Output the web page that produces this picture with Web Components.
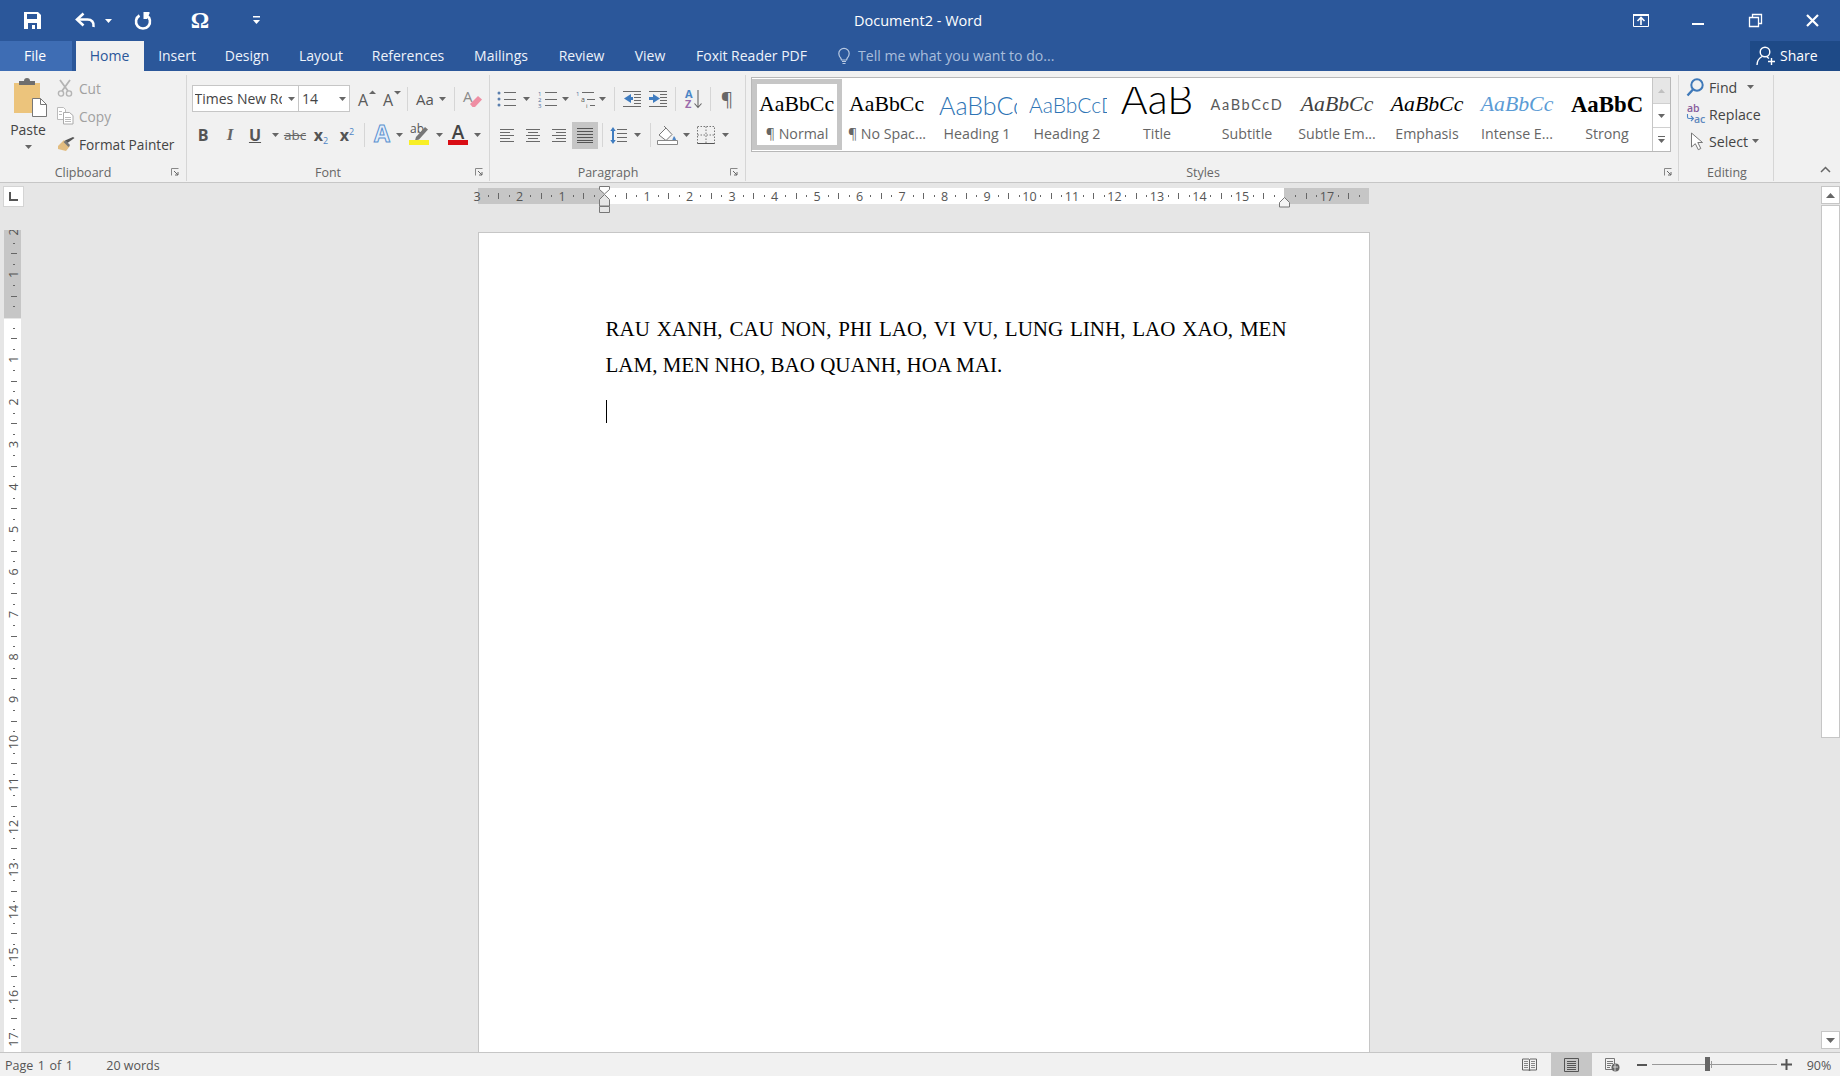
<!DOCTYPE html>
<html><head><meta charset="utf-8"><title>Document2 - Word</title>
<style>html,body{margin:0;height:100%;overflow:hidden;background:#e6e6e6}</style></head>
<body><word-app></word-app>
<script>
const SANS='"Open Sans","Noto Sans",sans-serif';
const s=(w,h,b,extra='')=>`<svg width="${w}" height="${h}" viewBox="0 0 ${w} ${h}" style="display:block;overflow:visible;${extra}">${b}</svg>`;
const row=(start,items,cs='')=>{let x=start,o='';for(const [c,w,html,st] of items){const l=c-w/2;o+=`<word-cell style="width:${w}px;margin-left:${(l-x).toFixed(2)}px;${cs}${st||''}">${html||''}</word-cell>`;x=l+w;}return o;};
const caret=(f='#666')=>s(7,4,`<path d="M0 0h7L3.5 4z" fill="${f}"/>`);
const sep=(h=24)=>`<div style="width:1px;height:${h}px;background:#d6d6d6"></div>`;
const lines=(arr,c='#6a6a6a')=>arr.map(([x1,y,x2])=>`<path d="M${x1} ${y}.5H${x2}" stroke="${c}"/>`).join('');
const I={
 save:s(17,17,`<path fill="#fff" d="M0 0h14l3 3v14H0z"/><path fill="#2b579a" d="M3 2h10v5H3zM4 11h9v6h-2v-4H8v4H4z"/><path fill="#fff" d="M8 14h2v3H8z"/>`),
 undo:s(19,17,`<path d="M17.5 15c.8-5-2-7.5-6-7.5H3" fill="none" stroke="#fff" stroke-width="2.6"/><path d="M7.5 1.5L1 7.5l6.5 6" fill="none" stroke="#fff" stroke-width="2.6"/>`),
 redo:s(18,17,`<path d="M5.5 3.5a7 7 0 1 0 7 0" fill="none" stroke="#fff" stroke-width="2.6"/><path fill="#fff" d="M9.5 0h6v1.5L13 7H9.5z"/>`),
 qc:s(7,9,`<path d="M0 0h7v1.5H0z" fill="#fff"/><path d="M0 4h7L3.5 8z" fill="#fff"/>`),
 disp:s(17,13,`<path d="M.5.5h15v12H.5z" fill="none" stroke="#fff"/><path d="M0 0h16v2H0z" fill="#fff"/><path d="M8 3.5v7.500M4.500 7l3.500-3.500 3.500 3.500" fill="none" stroke="#fff" stroke-width="1.600"/>`),
 min:s(12,2,`<path d="M0 0h12v2H0z" fill="#fff"/>`),
 rest:s(13,13,`<path d="M.5 3.500h9v9h-9zM3.500 3V.5h9v9H10" fill="none" stroke="#fff" stroke-width="1.3"/>`),
 close:s(13,13,`<path d="M1 1l11 11M12 1L1 12" stroke="#fff" stroke-width="2.200"/>`),
 bulb:s(12,17,`<path d="M3 11.500C1.500 10 .8 8.500.8 6.500a5.200 5.200 0 0 1 10.400 0c0 2-.7 3.500-2.200 5l-.4 1.500H3.400z" fill="none" stroke="#b8c9e2" stroke-width="1.2"/><path d="M4 14.500h4M4.500 16.500h3" stroke="#b8c9e2"/>`),
 share:s(20,20,`<circle cx="9" cy="6" r="4.800" fill="none" stroke="#fff" stroke-width="1.400"/><path d="M1 19c0-4 2.500-7 5-8.500M11 11l2 1.500" fill="none" stroke="#fff" stroke-width="1.400"/><path d="M15.500 12v7M12 15.500h7" stroke="#fff" stroke-width="1.400"/>`),
 paste:s(36,40,`<path fill="#ecc47c" d="M1 6h26v30H1z"/><path fill="#6e6e6e" d="M6 8V4h5a3 3 0 0 1 6 0h5v4z"/><path d="M19.500 21.500h8l6 6V39.500h-14z" fill="#fff" stroke="#777"/><path d="M27.500 21.500v6h6" fill="none" stroke="#777"/>`),
 cut:s(17,18,`<path d="M3 1l8 11M13 1L5 12" stroke="#b4b4b4" stroke-width="1.800"/><circle cx="4" cy="14.500" r="2.600" fill="none" stroke="#b4b4b4" stroke-width="1.400"/><circle cx="12" cy="14.500" r="2.600" fill="none" stroke="#b4b4b4" stroke-width="1.400"/>`),
 copy:s(17,18,`<path d="M.5.5h6l2 2v10h-8z" fill="#fff" stroke="#bbb"/><path d="M6.500 5.500h6l3.500 3v8.500h-9.500z" fill="#fff" stroke="#aaa"/>`+lines([[2,4,5],[2,7,5],[8,10,14],[8,12,14],[8,14,14]],'#bbb')),
 brush:s(18,15,`<path d="M1 9l6-6 6 6-4 5-8-2z" fill="#e3bd80"/><path d="M8 3.500l2.500 2.500L17.500 1 16 0z" fill="#555"/><path d="M6.500 5l5 5 1.500-2-4.500-4.500z" fill="#777"/>`),
 launch:s(8,8,`<path d="M.5 7.500v-7h7" fill="none" stroke="#888"/><path d="M3 3l4 4M7 4v3H4" fill="none" stroke="#666"/>`),
 grow:s(20,18,`<text x="0" y="16" font-size="16" fill="#5a5a5a">A</text><path d="M11 4l3.500-3.500L18 4z" fill="#666"/>`),
 shrink:s(20,18,`<text x="0" y="16" font-size="16" fill="#5a5a5a">A</text><path d="M11 1l3.500 3.500L18 1z" fill="#666"/>`),
 clear:s(20,20,`<text x="0" y="13" font-size="15" fill="#8a8a8a">A</text><path d="M7 15l8-8 4 3.500-7 7.500H9.500z" fill="#ef8ea3"/>`),
 glow:s(24,24,`<text x="12" y="19" text-anchor="middle" font-size="23" font-weight="700" fill="#e4eefa" stroke="#5c92d0" stroke-width="1">A</text>`),
 hl:s(22,22,`<text x="1" y="9" font-size="12" fill="#555">ab</text><path d="M7 13l9-10 3 2.500-9 10-4 1z" fill="#777"/><path d="M0 16h20v5H0z" fill="#f8ef26"/>`),
 fc:s(22,22,`<text x="10" y="15" text-anchor="middle" font-size="19" font-weight="600" fill="#444">A</text><path d="M0 16h20v5H0z" fill="#d90d14"/>`),
 bullets:s(20,16,`<circle cx="2" cy="2" r="1.500" fill="#5b7fae"/><circle cx="2" cy="8" r="1.500" fill="#5b7fae"/><circle cx="2" cy="14" r="1.500" fill="#5b7fae"/>`+lines([[7,1,19],[7,8,19],[7,14,19]])),
 nums:s(20,16,`<text x="0" y="5" font-size="6" fill="#4e6f9c">1</text><text x="0" y="11" font-size="6" fill="#4e6f9c">2</text><text x="0" y="17" font-size="6" fill="#4e6f9c">3</text>`+lines([[7,1,19],[7,8,19],[7,14,19]])),
 multi:s(20,16,`<text x="0" y="5" font-size="6" fill="#4e6f9c">1</text><text x="5" y="11" font-size="7" fill="#555">a</text><text x="10" y="17" font-size="6" fill="#555">i</text>`+lines([[6,1,18],[11,8,19],[14,14,19]])),
 dec:s(19,16,`<path d="M8 3L1 7.500 8 12z" fill="#3f7cc0"/><path d="M7 6h3v3H7z" fill="#3f7cc0"/>`+lines([[0,0,18],[11,3,18],[11,6,18],[11,9,18],[11,12,18],[0,15,18]])),
 inc:s(19,16,`<path d="M4 3l7 4.500L4 12z" fill="#3f7cc0"/><path d="M0 6h5v3H0z" fill="#3f7cc0"/>`+lines([[0,0,18],[11,3,18],[11,6,18],[11,9,18],[11,12,18],[0,15,18]])),
 sort:s(18,20,`<text x="0" y="9" font-size="11" font-weight="700" fill="#4c86c6">A</text><text x="0" y="19" font-size="11" font-weight="700" fill="#9b6bab">Z</text><path d="M13 1v17M9.500 14.500l3.500 4 3.500-4" fill="none" stroke="#666" stroke-width="1.100"/>`),
 al:s(15,13,lines([[0,0,14],[0,3,10],[0,6,14],[0,9,10],[0,12,14]])),
 ac:s(15,13,lines([[0,0,14],[2,3,12],[0,6,14],[2,9,12],[0,12,14]])),
 ar:s(15,13,lines([[0,0,14],[4,3,14],[0,6,14],[4,9,14],[0,12,14]])),
 aj:s(17,15,lines([[0,0,16],[0,3,16],[0,6,16],[0,9,16],[0,12,16],[0,14,16]],'#555')),
 lsp:s(18,19,`<path d="M3 1L.3 5h5.400zM3 18L.3 14h5.400z" fill="#3f7cc0"/><path d="M2 5h2v9H2z" fill="#3f7cc0"/>`+lines([[7,3,17],[7,7,17],[7,11,17],[7,15,17]])),
 shade:s(21,20,`<path d="M2 10l7-7 6 6.500-6 6z" fill="#fff" stroke="#777"/><path d="M7 1l2 2" stroke="#777"/><path d="M17 11c1.500 2 2 3 2 4a1.800 1.800 0 0 1-3.600 0c0-1 .8-2.200 1.600-4z" fill="#4f86c6"/><path d="M.5 15.500h20v4H.5z" fill="#fff" stroke="#888"/>`),
 border:s(18,18,`<path d="M.5.5h17v17H.5zM9 .5v17M.5 9h17" fill="none" stroke="#777" stroke-dasharray="1.500 1.500"/><path d="M.5 17.500h17" stroke="#555"/>`),
 find:s(18,19,`<circle cx="11" cy="7" r="5.700" fill="none" stroke="#3f79b9" stroke-width="2"/><path d="M7 11.500L1.500 17.500" stroke="#3f79b9" stroke-width="2.400"/>`),
 repl:s(21,20,`<text x="1" y="8" font-size="10.500" font-weight="600" fill="#875c9c">ab</text><text x="8" y="19" font-size="10.500" font-weight="600" fill="#5f88bd">ac</text><path d="M1.500 10v3c0 1 .5 1.500 1.500 1.500h4M5 12l2.500 2.500L5 17" fill="none" stroke="#4f86c6" stroke-width="1.100"/>`),
 sel:s(13,19,`<path d="M1.500 1v14l3.800-3.300 3 6 2.500-1.200-3-6h4.700z" fill="#fff" stroke="#777"/>`),
 chev:s(11,7,`<path d="M1 6l4.500-4.500L10 6" fill="none" stroke="#666" stroke-width="1.500"/>`),
 book:s(15,14,`<path d="M.5 1h6.500l.5.700.5-.7h6.500v11H8l-.5 1-.5-1H.5zM7.500 2v10" fill="none" stroke="#666"/>`+lines([[2,3,6],[2,5,6],[2,7,6],[2,9,6],[9,3,13],[9,5,13],[9,7,13],[9,9,13]],'#888')),
 print:s(15,14,`<path d="M.5.5h14v13H.5z" fill="none" stroke="#555"/>`+lines([[3,3,12],[3,5,12],[3,7,12],[3,9,12],[3,11,12]],'#555')),
 web:s(15,14,`<path d="M.5.500h9v11h-9z" fill="none" stroke="#777"/>`+lines([[2,3,8],[2,5,8],[2,7,6],[2,9,5]],'#777')+`<circle cx="10.500" cy="9.500" r="4" fill="#666"/><path d="M8 9h5M10 6v7" stroke="#eee" stroke-width=".8"/>`),
};
class Base extends HTMLElement{
 constructor(){super();this.attachShadow({mode:'open'});}
 connectedCallback(){if(!this._d){this._d=1;this.shadowRoot.innerHTML=this.render();}}
}
class WordCell extends Base{render(){return `<style>:host{display:flex;align-items:center;justify-content:center;flex:none;white-space:nowrap}</style><slot></slot>`}}
class WordApp extends Base{render(){return `<style>:host{display:grid;grid-template-rows:41px 30px 112px 1fr 24px;width:100vw;height:100vh;overflow:hidden;font-family:${SANS}}</style>
<word-titlebar></word-titlebar><word-tabs></word-tabs><word-ribbon></word-ribbon><word-workspace></word-workspace><word-statusbar></word-statusbar>`}}
class WordTitlebar extends Base{render(){return `<style>:host{display:flex;align-items:center;background:#2b579a;color:#fff;font-size:14.500px}</style>`+
 row(0,[[32,32,I.save],[85,30,I.undo],[108,12,s(7,4,'<path d="M0 0h7L3.500 4z" fill="#fff"/>')],[143,30,I.redo],[200,30,`<span style="font:700 23px 'Liberation Serif',serif">Ω</span>`],[256,14,I.qc],[918,300,'Document2 - Word'],[1641,30,I.disp],[1698,30,I.min,'padding-top:6px;box-sizing:border-box;height:16px;'],[1755,30,I.rest],[1812,30,I.close]])}}
class WordTabs extends Base{render(){
 return `<style>:host{display:flex;align-items:stretch;background:#2b579a;color:#eef3fa;font-size:14px}</style>`+
 row(0,[[36,72,'<span style="margin:-2px 2px 0 0">File</span>','background:#3e6db4;color:#fff;'],[110,68,'<span style="margin:-2px 1px 0 0">Home</span>','background:#f1f1f1;color:#2b579a;']].concat([[177,50,'Insert'],[247,60,'Design'],[321,60,'Layout'],[408,90,'References'],[501,70,'Mailings'],[581.5,60,'Review'],[650,50,'View'],[751.5,130,'Foxit Reader PDF']].map(([c,w,t])=>[c,w,`<span style="margin-top:-2px">${t}</span>`])).concat([[844,20,I.bulb,'padding-bottom:2px;box-sizing:border-box;'],[958,200,'<span style="margin-top:-2px;font-size:14.100px">Tell me what you want to do...</span>','color:#a9bedc;justify-content:flex-start;'],[1795,90,`<span style="margin:0 4px 0 6px;display:block">${I.share}</span><span style="margin-top:-2px">Share</span>`,'background:#1e4a87;color:#fff;justify-content:flex-start;']]))}}
class WordGroup extends Base{render(){
 const w=this.getAttribute('w'),lc=+this.getAttribute('lc'),ln=this.getAttribute('launch');
 return `<style>:host{display:flex;flex-direction:column;flex:none;box-sizing:border-box;width:${w}px;height:106px;margin-top:4px;position:relative;border-right:1px solid #d6d6d6}
 .c{flex:1;min-height:0}.l{height:18px;line-height:18px;font-size:12.500px;color:#666;text-align:center;margin-bottom:-1px;width:${lc*2}px}
 .k{position:absolute;right:${ln||6}px;bottom:5px}</style><div class="c"><slot></slot></div><div class="l">${this.getAttribute('label')}</div>${ln!==null&&ln!=='0'?`<div class="k">${I.launch}</div>`:''}`}}
class WordStyle extends Base{render(){return `<style>:host{display:block;box-sizing:border-box;width:90px;height:71px;flex:none;margin-top:1px}
 .p{width:78px;height:35px;margin:8px 0 0 7px;overflow:hidden;white-space:nowrap;color:#000}
 .n{text-align:center;height:20px;line-height:20px;margin-top:2px;font-size:14.200px;color:#666;white-space:nowrap}</style>
 <div class="p" part="p"><slot></slot></div><div class="n">${this.getAttribute('label')}</div>`}}
class WordRibbon extends Base{render(){
 const dim='color:#a0a0a0;font-size:13.700px;',tx='color:#444;font-size:13.700px;';
 const stack=(arr)=>arr.map(([ic,txt,st])=>`<div style="display:flex;align-items:center;height:28px;white-space:nowrap;${st}"><span style="width:22px;display:flex;justify-content:flex-start">${ic}</span>${txt}</div>`).join('');
 const center=(c,body)=>`<div style="margin-left:-2px">${body}</div>`;
 return `<style>:host{display:flex;background:#f1f1f1;border-bottom:1px solid #c6c6c6;box-sizing:border-box;height:112px;align-items:flex-start;position:relative}
 .r{display:flex;align-items:center}
 .b{font-size:15px;color:#555;font-weight:700}
 </style>
 <word-group w="187" lc="83" label="Clipboard" launch="7">
  <div style="display:flex;margin-top:-1px">
   <div style="width:57px;flex:none;color:#444;font-size:14px;text-align:center">
     <div style="margin:3px 0 0 13px">${I.paste}</div><div style="width:56px;margin-top:3px;height:20px;line-height:20px">Paste</div><div style="display:flex;justify-content:center;width:56px;margin-top:5px">${caret()}</div>
   </div>
   <div>${stack([[I.cut,'Cut',dim],[I.copy,'Copy',dim],[I.brush,'Format Painter',tx]])}</div>
  </div>
 </word-group>
 <word-group w="303" lc="141" label="Font" launch="6">
  <div class="r" style="margin-top:10px;height:27px;color:#444">
  ${row(187,[[245,107,`<span style="width:87px;overflow:hidden;font-size:14px;white-space:nowrap;display:block">Times New Roman</span><span style="margin-left:6px">${caret()}</span>`,'height:27px;background:#fff;border:1px solid #c6c6c6;box-sizing:border-box;justify-content:flex-start;padding-left:2px;'],[324,52,`<span style="font-size:14px;margin-left:3px;margin-right:auto">14</span><span style="margin-right:3px">${caret()}</span>`,'height:27px;background:#fff;border:1px solid #c6c6c6;box-sizing:border-box;'],[368,24,I.grow],[393,24,I.shrink],[407,1,sep()],[425,26,'<span style="font-size:15px;color:#555">Aa</span>'],[442,8,caret()],[454,1,sep()],[473,22,I.clear]])}
  </div>
  <div class="r" style="margin-top:9px;height:28px">
  ${row(187,[[203,24,'<span class="b" style="font-size:16px">B</span>'],[230,24,`<span style="font:italic 700 17px 'Liberation Serif',serif;color:#666">I</span>`],[255,24,'<span class="b" style="text-decoration:underline;font-size:16px">U</span>'],[275,8,caret()],[295,30,'<span style="font-size:13.500px;color:#666;text-decoration:line-through">abc</span>'],[321,22,'<span class="b" style="font-size:16px">x<sub style="font-size:9px;color:#4f86c6;font-weight:400;vertical-align:-3px">2</sub></span>'],[347,22,'<span class="b" style="font-size:16px">x<sup style="font-size:9px;color:#4f86c6;font-weight:400;vertical-align:6px">2</sup></span>'],[364,1,sep()],[382,26,I.glow],[399,8,caret()],[420,22,I.hl],[439,8,caret()],[459,22,I.fc],[477,8,caret()]])}
  </div>
 </word-group>
 <word-group w="256" lc="118" label="Paragraph" launch="7">
  <div class="r" style="margin-top:10px;height:27px">
  ${row(490,[[507,22,I.bullets],[526,8,caret()],[548,22,I.nums],[565,8,caret()],[586,22,I.multi],[602,8,caret()],[614,1,sep()],[632,22,I.dec],[658,22,I.inc],[675,1,sep()],[694,22,I.sort],[710,1,sep()],[727,22,`<span style="font-size:19px;color:#666;line-height:20px">¶</span>`]])}
  </div>
  <div class="r" style="margin-top:9px;height:28px">
  ${row(490,[[507,22,I.al],[533,22,I.ac],[559,22,I.ar],[585,26,I.aj,'height:27px;background:#c6c6c6;'],[602,1,sep()],[619,22,I.lsp],[637,8,caret()],[650,1,sep()],[667,24,I.shade],[686,8,caret()],[706,22,I.border],[725,8,caret()]])}
  </div>
 </word-group>
 <word-group w="933" lc="457" label="Styles" launch="6">
  <div style="display:flex;margin:2px 0 0 5px;width:920px;height:75px;box-sizing:border-box;border:1px solid #b8b8b8;background:#fff">
   <word-style label="¶ Normal" style="box-shadow:inset 0 0 0 5px #c6c6c6"><span style="font:21.800px/35px 'Liberation Serif',serif;display:block">AaBbCc</span></word-style>
   <word-style label="¶ No Spac..."><span style="font:21.800px/35px 'Liberation Serif',serif;display:block">AaBbCc</span></word-style>
   <word-style label="Heading 1"><span style="font:300 25px/36px Lato,sans-serif;color:#2e74b5;display:block">AaBbCc</span></word-style>
   <word-style label="Heading 2"><span style="font:300 21px/36px Lato,sans-serif;color:#2e74b5;display:block;">AaBbCcD</span></word-style>
   <word-style label="Title"><span style="font:300 41px/24px Lato,sans-serif;display:block;text-align:center;margin-left:-2px">AaB</span></word-style>
   <word-style label="Subtitle"><span style="font:400 14.500px/36px Lato,sans-serif;color:#5a5a5a;letter-spacing:1.600px;display:block;text-align:center;margin-left:-2px">AaBbCcD</span></word-style>
   <word-style label="Subtle Em..."><span style="font:italic 21.800px/35px 'Liberation Serif',serif;color:#404040;display:block;text-align:center;margin-left:-2px">AaBbCc</span></word-style>
   <word-style label="Emphasis"><span style="font:italic 21.800px/35px 'Liberation Serif',serif;display:block;text-align:center;margin-left:-2px">AaBbCc</span></word-style>
   <word-style label="Intense E..."><span style="font:italic 21.800px/35px 'Liberation Serif',serif;color:#5b9bd5;display:block;text-align:center;margin-left:-2px">AaBbCc</span></word-style>
   <word-style label="Strong"><span style="font:700 22.800px/35px 'Liberation Serif',serif;display:block;text-align:center;margin-left:-2px">AaBbC</span></word-style>
   <div style="margin-left:auto;width:18px;flex:none;display:flex;flex-direction:column;box-sizing:border-box;border-left:1px solid #c6c6c6">
     <div style="height:26px;background:#e6e6e6;display:flex;align-items:center;justify-content:center;border-bottom:1px solid #d0d0d0;box-sizing:border-box">${s(7,4,'<path d="M3.500 0L7 4H0z" fill="#c0c0c0"/>')}</div>
     <div style="height:24px;display:flex;align-items:center;justify-content:center;border-bottom:1px solid #d0d0d0;box-sizing:border-box">${caret()}</div>
     <div style="flex:1;display:flex;flex-direction:column;gap:2px;align-items:center;justify-content:center"><div style="width:7px;height:1px;background:#666"></div>${caret()}</div>
   </div>
  </div>
 </word-group>
 <word-group w="95" lc="48" label="Editing" launch="0">
  <div style="padding:0 0 0 7px;color:#444;font-size:14.200px">
   <div class="r" style="height:24px;white-space:nowrap"><span style="width:23px">${I.find}</span>Find<span style="margin-left:10px">${caret()}</span></div>
   <div class="r" style="height:30px;white-space:nowrap"><span style="width:23px">${I.repl}</span>Replace</div>
   <div class="r" style="height:24px;white-space:nowrap"><span style="width:23px;padding-left:4px;box-sizing:border-box">${I.sel}</span>Select<span style="margin-left:4px">${caret()}</span></div>
  </div>
 </word-group>
 <word-cell style="margin:95px 0 0 46px;width:11px;height:7px">${I.chev}</word-cell>`}}
class WordHruler extends Base{render(){
 const cm=42.5,z=604.5;let b='';
 b+=`<rect x="478" y="188" width="126" height="16" fill="#c6c6c6"/><rect x="604" y="188" width="680" height="16" fill="#fff"/><rect x="1284" y="188" width="85" height="16" fill="#c6c6c6"/>`;
 for(let i=-3;i<=17;i++){const x=z+i*cm;
  if(i!==0&&i!==16)b+=`<text x="${x}" y="200.500" text-anchor="middle">${Math.abs(i)}</text>`;
  if(x+cm<=1372)b+=`<rect x="${Math.round(x+cm/4)}" y="195" width="1" height="2" fill="#666"/><rect x="${Math.round(x+cm/2)}" y="193" width="1" height="6" fill="#666"/><rect x="${Math.round(x+3*cm/4)}" y="195" width="1" height="2" fill="#666"/>`;
 }
 b+=`<path d="M599.500 186.500h10v3l-5 4.500-5-4.500z" fill="#fff" stroke="#777"/><path d="M604.500 194.500l5 5v6.500h-10v-6.500z" fill="#e6e6e6" stroke="#777"/><path d="M599.500 206.500h10v6h-10z" fill="#e6e6e6" stroke="#777"/>`;
 b+=`<path d="M1284.500 197.500l5 5v4.500h-10v-4.500z" fill="#f4f4f4" stroke="#777"/>`;
 return `<style>:host{display:block;height:28px;width:892px;flex:none;margin-top:3px}svg{display:block;overflow:visible}text{font-size:12.500px;fill:#555}</style><svg width="892" height="28" viewBox="478 186 892 28">${b}</svg>`}}
class WordVruler extends Base{render(){
 const cm=42.5,z=317;let b=`<rect x="4" y="230" width="17" height="88" fill="#c6c6c6"/><rect x="4" y="319" width="17" height="740" fill="#fff"/>`;
 for(let i=-2;i<=17;i++){const y=z+i*cm;
  if(i!==0)b+=`<text transform="translate(17.500,${y}) rotate(-90)" text-anchor="middle">${Math.abs(i)}</text>`;
  if(i<17)b+=`<rect x="13" y="${Math.round(y+cm/4)}" width="2" height="1" fill="#666"/><rect x="11" y="${Math.round(y+cm/2)}" width="6" height="1" fill="#666"/><rect x="13" y="${Math.round(y+3*cm/4)}" width="2" height="1" fill="#666"/>`;
 }
 return `<style>:host{display:flex;flex-direction:column;width:26px;flex:none;overflow:hidden}
 .t{width:19px;height:19px;margin:4px 0 0 4px;background:#fff;box-shadow:0 0 0 1px #d4d4d4;display:flex;align-items:center;justify-content:center;flex:none}
 .v{display:block;margin-top:24px;flex:none}text{font-size:12.500px;fill:#555}</style>
 <div class="t">${s(9,9,'<path d="M1 0v8h8" fill="none" stroke="#555" stroke-width="2"/>')}</div><svg class="v" width="26" height="830" viewBox="0 230 26 830">${b}</svg>`}}
class WordPage extends Base{render(){return `<style>:host{display:block;box-sizing:border-box;flex:1;width:892px;background:#fff;border:1px solid #c6c6c6;border-bottom:0;margin-top:18px;padding:78px 0 0 127px;color:#000;font:21px/36px "Liberation Serif",serif;white-space:nowrap}
 .c{width:1px;height:23px;background:#000;margin-top:17px}</style><div><slot></slot></div><div class="c"></div>`}}
class WordScrollbar extends Base{render(){return `<style>:host{display:flex;flex-direction:column;width:19px;flex:none;box-sizing:border-box;padding-top:3px}
 .b{height:18px;background:#fff;border:1px solid #c6c6c6;box-sizing:border-box;display:flex;align-items:center;justify-content:center;flex:none}
 .t{height:533px;background:#fff;border:1px solid #c6c6c6;box-sizing:border-box;margin-top:1px;flex:none}
 .sp{flex:1}.d{margin-bottom:3px}</style>
 <div class="b">${s(9,5,'<path d="M4.500 0L9 5H0z" fill="#666"/>')}</div><div class="t"></div><div class="sp"></div><div class="b d">${s(9,5,'<path d="M0 0h9L4.500 5z" fill="#666"/>')}</div>`}}
class WordWorkspace extends Base{render(){return `<style>:host{display:flex;background:#e6e6e6;min-height:0;overflow:hidden}
 .m{flex:1;display:flex;flex-direction:column;align-items:center;min-width:0}</style>
 <word-vruler></word-vruler><div class="m"><word-hruler></word-hruler><word-page><span style="word-spacing:1.600px">RAU XANH, CAU NON, PHI LAO, VI VU, LUNG LINH, LAO XAO, MEN</span><br>LAM, MEN NHO, BAO QUANH, HOA MAI.</word-page></div><word-scrollbar></word-scrollbar>`}}
class WordStatusbar extends Base{render(){const t=x=>`<span style="margin-top:2px">${x}</span>`;return `<style>:host{display:flex;align-items:stretch;background:#f1f1f1;border-top:1px solid #c6c6c6;box-sizing:border-box;color:#555;font-size:12.500px}</style>`+
 row(0,[[39,70,t('<span style="word-spacing:1.300px">Page 1 of 1</span>')],[133,54,t('20 words')],[1529,24,I.book],[1571.5,41,I.print,'background:#c6c6c6;'],[1612,24,I.web],[1642,14,`<div style="width:10px;height:2px;background:#555"></div>`],[1714.5,126,`<div style="width:125px;height:1px;background:#999;position:relative"><div style="position:absolute;left:53px;top:-7px;width:5px;height:14px;background:#666"></div><div style="position:absolute;left:59px;top:-3px;width:1px;height:7px;background:#999"></div></div>`],[1786,14,s(11,11,'<path d="M5.500 0v11M0 5.500h11" stroke="#555" stroke-width="2"/>')],[1819,30,t('90%')]])}}
Object.entries({'word-cell':WordCell,'word-app':WordApp,'word-titlebar':WordTitlebar,'word-tabs':WordTabs,'word-group':WordGroup,'word-style':WordStyle,'word-ribbon':WordRibbon,'word-hruler':WordHruler,'word-vruler':WordVruler,'word-page':WordPage,'word-scrollbar':WordScrollbar,'word-workspace':WordWorkspace,'word-statusbar':WordStatusbar}).forEach(([n,c])=>customElements.define(n,c));
</script></body></html>
